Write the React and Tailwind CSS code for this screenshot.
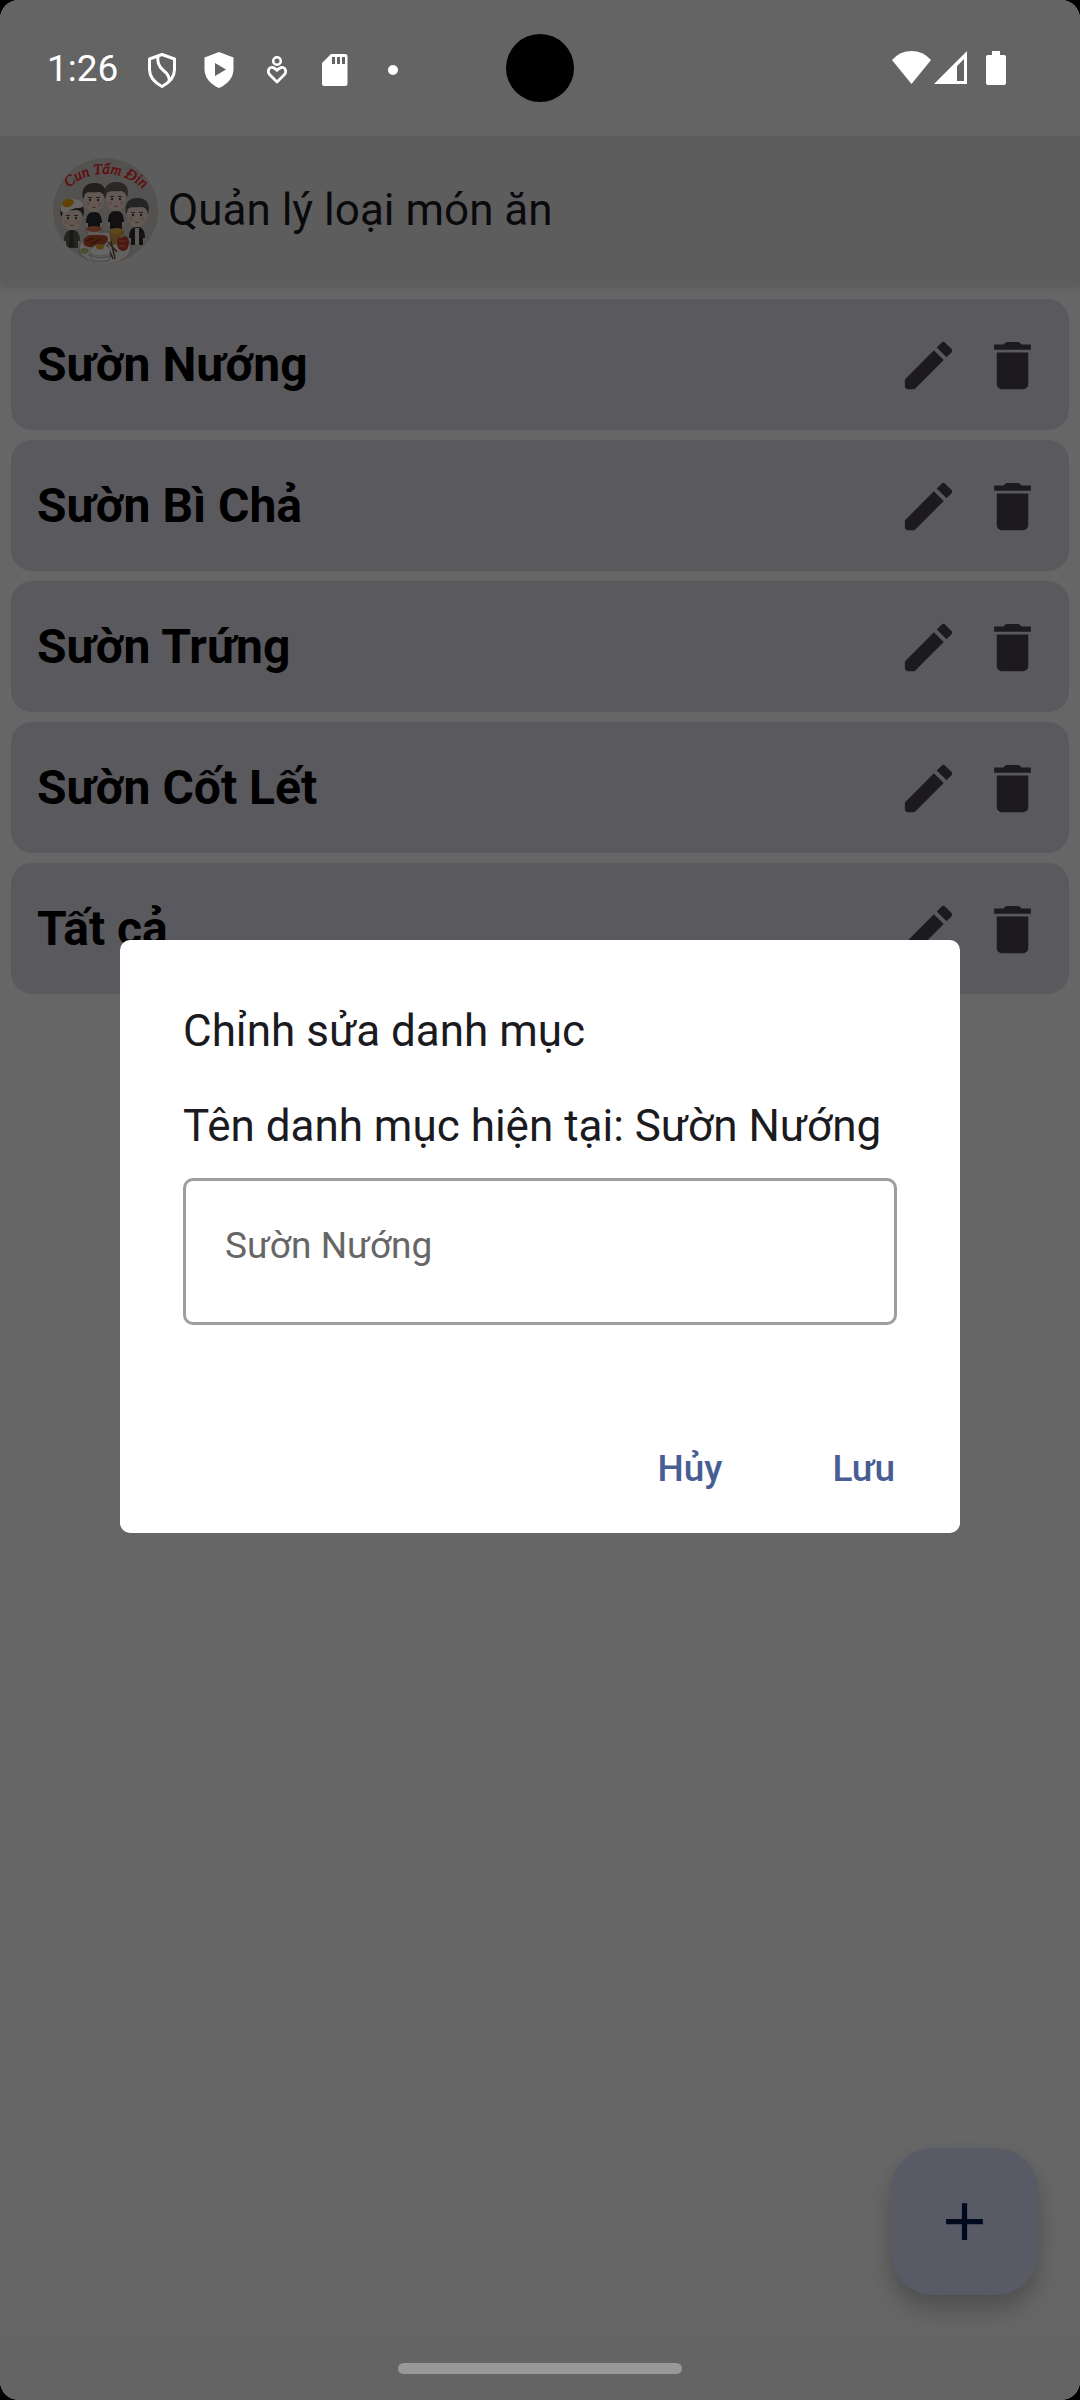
import { useState } from "react";

const categories = ["Sườn Nướng", "Sườn Bì Chả", "Sườn Trứng", "Sườn Cốt Lết", "Tất cả"];

function PencilIcon() {
  return (
    <svg viewBox="0 0 24 24" className="size-[63px]" fill="currentColor" aria-hidden="true">
      <path d="M3 17.46v2.54c0 .28.1.5.3.7.2.2.42.3.7.3h2.54c.13 0 .26-.05.35-.15L17.81 9.94l-3.75-3.75L3.15 17.1c-.1.1-.15.22-.15.36zM20.71 7.04c.39-.39.39-1.02 0-1.41l-2.34-2.34c-.39-.39-1.02-.39-1.41 0l-1.83 1.83 3.75 3.75 1.83-1.83z" />
    </svg>
  );
}

function TrashIcon() {
  return (
    <svg viewBox="0 0 24 24" className="size-[63px]" fill="currentColor" aria-hidden="true">
      <path d="M6 19c0 1.1.9 2 2 2h8c1.1 0 2-.9 2-2V7H6v12zM19 4h-3.5l-.71-.71c-.18-.18-.44-.29-.7-.29H9.91c-.26 0-.52.11-.7.29L8.500 4H5v2h14V4z" />
    </svg>
  );
}

function Person({ x, y, hair, shirt }) {
  return (
    <g transform={`translate(${x} ${y})`}>
      <path d="M-8 31c0-10 2-14 8-14s8 4 8 14z" fill="#f2d9cd" />
      <path d="M-8 27c0-8 3-11 8-11s8 3 8 11l-2 0v7H-6v-7z" fill={shirt} />
      <ellipse cx="0" cy="4" rx="10" ry="12" fill="#f4ddd2" />
      <path d="M-11 3C-14-9-6-14 1-13 10-13 14-6 11 3 10-2 8-4 4-4-1-3-6-5-9-2-10 0-10 2-11 3z" fill={hair} />
      <path d="M-6 1.500h4M2 1.500h4" stroke="#5a4a45" strokeWidth="1" />
      <circle cx="-4" cy="4" r="1.200" fill="#4a3b38" />
      <circle cx="4" cy="4" r="1.200" fill="#4a3b38" />
      <circle cx="-6" cy="8" r="2" fill="#efc0b0" />
      <circle cx="6" cy="8" r="2" fill="#efc0b0" />
      <path d="M-2 11q2 1 4 0" stroke="#b7705f" strokeWidth="1" fill="none" />
    </g>
  );
}

function Logo() {
  return (
    <svg viewBox="0 0 105 105" className="size-[105px]" role="img" aria-label="Logo">
      <defs>
        <clipPath id="logo-clip"><circle cx="52.500" cy="52.500" r="52.500" /></clipPath>
        <path id="logo-arc" d="M16 30C34 11 70 11 90 31" />
      </defs>
      <g clipPath="url(#logo-clip)">
        <rect width="105" height="105" fill="#cfccc7" />
        <text fill="#f01818" fontSize="15" fontStyle="italic" fontFamily="'Liberation Serif', serif" stroke="#f01818" strokeWidth=".4">
          <textPath href="#logo-arc" startOffset="50%" textAnchor="middle">Cun Tấm Đin</textPath>
        </text>
        <Person x={41} y={38} hair="#55504e" shirt="#262b36" />
        <Person x={63} y={37} hair="#6b6261" shirt="#2d2a2e" />
        <Person x={19} y={56} hair="#4a3730" shirt="#5a5a50" />
        <path d="M17 72h3l1 17h-5z" fill="#3a3a38" />
        <Person x={84} y={53} hair="#5c5a5e" shirt="#302b30" />
        <path d="M82 70h4v17h-4z" fill="#e6e3de" />
        <path d="M8 53c-1-8 5-13 12-12 6 0 11 3 10 7-2 3-6 1-10 3-5 1-8 6-12 2z" fill="#fffdf6" />
        <ellipse cx="15" cy="45" rx="6" ry="4" fill="#f2a50c" transform="rotate(-20 15 45)" />
        <ellipse cx="52" cy="90" rx="26" ry="16" fill="#f4f3ee" stroke="#8f8c86" strokeWidth=".7" />
        <path d="M56 73l11-3 4 3-1 12-12 2z" fill="#d29a48" />
        <ellipse cx="63" cy="73" rx="6" ry="3" fill="#edb246" />
        <path d="M33 71h16c-1 6-4 8-8 8s-7-2-8-8z" fill="#efe8df" stroke="#a1877a" strokeWidth=".6" />
        <ellipse cx="41" cy="71" rx="8" ry="3" fill="#d8704b" />
        <path d="M32 80c6-5 13-2 17-3 6 0 8 4 4 8-5 5-18 6-22 2-1-3-1-5 1-7z" fill="#b5522c" />
        <path d="M33 83l8-3M38 86l10-5" stroke="#8b3118" strokeWidth="1.500" />
        <ellipse cx="70" cy="85" rx="6" ry="8" fill="#bd3c2b" />
        <path d="M66 83h7M66 88h7" stroke="#e78a6f" strokeWidth="1" />
        <path d="M66 80c2-5 6-5 8-2M27 92c2-3 8-2 9 0-1 5-7 5-9 0z" fill="#b5c46c" />
        <path d="M55 84l9 10M58 83l4 18M54 87l6 14" stroke="#6d4636" strokeWidth="1.500" />
        <path d="M37 94c1-6 7-8 12-7 6 0 9 4 8 8-4 4-16 4-20-1z" fill="#fff" stroke="#b8b5ae" strokeWidth=".6" />
        <ellipse cx="47" cy="89" rx="4" ry="2.500" fill="#e8a028" />
        <path d="M36 96c6 5 16 5 22 1l-3 6H40z" fill="#fff" stroke="#777" strokeWidth=".6" />
      </g>
    </svg>
  );
}

function StatusBar() {
  return (
    <header className="relative z-20 flex h-[136px] items-center justify-between pr-12 pl-[47px] text-white">
      <div className="flex items-center pt-px">
        <time className="text-[37px] leading-[44px]">1:26</time>
        <svg viewBox="0 0 260 40" className="ml-[27px] h-10 w-[260px]" aria-hidden="true">
          <g fill="none" stroke="#fff" strokeWidth="3">
            <path d="M17 5.500L4.500 10v10.500c0 7.500 5 13 12.500 17 7.500-4 12.500-9.500 12.500-17V10z" strokeLinejoin="round" />
            <path d="M13 7c-1 6 0 10 5 14 5 4 7 7 6 11" />
            <circle cx="132" cy="12" r="3.800" strokeWidth="2.600" />
            <path d="M132 33l-7.500-7.500c-2-2.500-1.500-6 1.300-7 2.400-.8 4.200.5 6.200 3 2-2.500 3.800-3.800 6.200-3 2.800 1 3.300 4.500 1.300 7z" strokeWidth="2.800" strokeLinejoin="round" />
          </g>
          <path d="M74 3L59.500 8.500V20c0 8.500 5.500 15 14.500 19 9-4 14.500-10.500 14.500-19V8.500zM70 14l11 6.500L70 27z" fill="#fff" fillRule="evenodd" />
          <path d="M186 5h14a2.500 2.500 0 0 1 2.500 2.500v27A2.500 2.500 0 0 1 200 37h-20.500a2.500 2.500 0 0 1-2.500-2.500V14zM187 8v7h3V8zm5 0v7h3V8zm5 0v7h3V8z" fill="#fff" fillRule="evenodd" />
          <circle cx="248" cy="21" r="5" fill="#fff" />
        </svg>
      </div>
      <svg viewBox="0 0 116 36" className="mr-6 h-9 w-[116px]" fill="#fff" aria-hidden="true">
        <path d="M0 10Q8 1 19.500 1T39 10L19.500 34z" />
        <path d="M75 1v33H42zM72 9l-7 7v15h7z" fillRule="evenodd" />
        <path d="M100 1h8v4h4a2 2 0 0 1 2 2v26a2 2 0 0 1-2 2H96a2 2 0 0 1-2-2V7a2 2 0 0 1 2-2h4z" />
      </svg>
      <div className="absolute top-[34px] left-1/2 size-[68px] -translate-x-1/2 rounded-full bg-black" />
    </header>
  );
}

function CategoryRow({ name }) {
  return (
    <li className="flex h-[131px] items-center justify-between rounded-[21px] bg-[#e2dfe8] pr-[25px] pl-[26px]">
      <span className="text-[48px] leading-[56px] font-bold text-black">{name}</span>
      <div className="flex gap-[21px] pt-0.5 text-[#46434e]">
        <button type="button" aria-label={`Sửa ${name}`}><PencilIcon /></button>
        <button type="button" aria-label={`Xóa ${name}`}><TrashIcon /></button>
      </div>
    </li>
  );
}

function EditDialog() {
  const [name, setName] = useState("");
  return (
    <div className="absolute inset-0 z-10 flex items-center justify-center bg-black/60 px-[120px] pt-[136px] pb-[63px]">
      <section role="dialog" aria-modal="true" aria-labelledby="dialog-title" className="w-full rounded-[10px] bg-white px-[63px] pt-[60px] pb-3 text-[#1b1b1f]">
        <h2 id="dialog-title" className="text-[44px] leading-[63px]">Chỉnh sửa danh mục</h2>
        <label htmlFor="category-name" className="mt-8 block text-[44px] leading-[63px]">
          Tên danh mục hiện tại: Sườn Nướng
        </label>
        <input
          id="category-name"
          value={name}
          onChange={(event) => setName(event.target.value)}
          placeholder="Sườn Nướng"
          className="mt-5 block h-[147px] w-full rounded-[10px] border-3 border-[#9e9e9e] px-[39px] pb-3 text-[37px] outline-none placeholder:text-[#666666]"
        />
        <div className="mt-[92px] flex justify-end text-[37px] leading-[52px] font-medium text-[#485d92]">
          <button type="button" className="px-[55px] py-[26px]">Hủy</button>
          <button type="button" className="py-[26px] pr-0.5 pl-[55px]">Lưu</button>
        </div>
      </section>
    </div>
  );
}

export default function App() {
  return (
    <div className="bg-black font-[Roboto,sans-serif]">
      <div className="relative flex min-h-screen flex-col overflow-hidden rounded-[19px] bg-[#fafafa]">
        <StatusBar />
        <div className="z-[1] flex h-[148px] items-center bg-[#e9e9e9] px-[53px] shadow-[0_4px_8px_rgba(0,0,0,0.12)]">
          <Logo />
          <h1 className="ml-[10px] text-[44px] leading-[52px] text-[#1b1b1f]">Quản lý loại món ăn</h1>
        </div>
        <main className="relative flex-1 bg-white">
          <ul className="flex flex-col gap-[10px] px-[11px] pt-[15px]">
            {categories.map((name) => <CategoryRow key={name} name={name} />)}
          </ul>
          <button type="button" aria-label="Thêm danh mục" className="absolute right-[42px] bottom-[42px] flex size-[147px] items-center justify-center rounded-[42px] bg-[#dce0fc] text-[#00174b] shadow-[0_16px_24px_rgba(0,0,0,0.2),0_3px_16px_rgba(0,0,0,0.06)]">
            <svg viewBox="0 0 24 24" className="size-[63px]" fill="currentColor" aria-hidden="true">
              <path d="M19 13h-6v6h-2v-6H5v-2h6V5h2v6h6z" />
            </svg>
          </button>
        </main>
        <footer className="relative z-20 flex h-[63px] items-center justify-center">
          <div className="h-[11px] w-[284px] rounded-full bg-[#989898]" />
        </footer>
        <EditDialog />
      </div>
    </div>
  );
}
